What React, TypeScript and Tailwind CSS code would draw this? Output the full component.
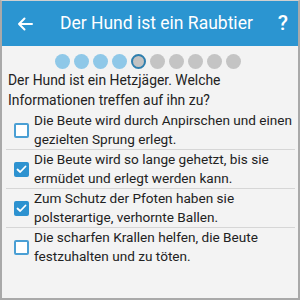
import { useState } from "react";

const options = [
  { text: "Die Beute wird durch Anpirschen und einen gezielten Sprung erlegt.", checked: false },
  { text: "Die Beute wird so lange gehetzt, bis sie ermüdet und erlegt werden kann.", checked: true },
  { text: "Zum Schutz der Pfoten haben sie polsterartige, verhornte Ballen.", checked: true },
  { text: "Die scharfen Krallen helfen, die Beute festzuhalten und zu töten.", checked: false },
];

const steps = ["done", "done", "done", "done", "current", "todo", "todo", "todo", "todo", "todo"];

export default function App() {
  const [checked, setChecked] = useState(options.map((o) => o.checked));

  return (
    <div
      className="w-[300px] h-[300px] overflow-hidden bg-[#f3f3f3] border-x-2 border-b-2 border-t border-x-[#a9a9a9] border-b-[#a9a9a9] border-t-[#d0d0d0] flex flex-col"
      style={{ fontFamily: "Roboto, 'Noto Sans', sans-serif" }}
    >
      <header className="h-[45px] shrink-0 bg-[#2b95d1] text-white flex items-center pl-[15px] pr-[10px]">
        <svg width="16" height="14" viewBox="0 0 16 14" className="shrink-0">
          <path d="M15 7H2M7.5 1.5 2 7l5.5 5.5" fill="none" stroke="white" strokeWidth="2" strokeLinecap="round" strokeLinejoin="round" />
        </svg>
        <h1 className="flex-1 text-center text-[17.5px] leading-none pl-[2px]">Der Hund ist ein Raubtier</h1>
        <span className="text-[21px] leading-none font-medium">?</span>
      </header>

      <div className="flex justify-center gap-[4px] pt-[8px] pr-[5px]">
        {steps.map((s, i) => (
          <span
            key={i}
            className={
              s === "done"
                ? "w-[15px] h-[15px] rounded-full bg-[#8fc8e8]"
                : s === "current"
                ? "w-[15px] h-[15px] rounded-full bg-[#c2c2c2] border-2 border-[#2f7fae]"
                : "w-[15px] h-[15px] rounded-full bg-[#c4c4c4]"
            }
          />
        ))}
      </div>

      <p className="px-[6px] pt-[1px] text-[13.9px] leading-[20px] text-[#222]">
        Der Hund ist ein Hetzjäger. Welche Informationen treffen auf ihn zu?
      </p>

      <ul className="pl-[4px] pt-[1px]">
        {options.map((o, i) => (
          <li
            key={i}
            className={
              i < options.length - 1
                ? "flex items-center border-b border-[#d6d6d6] mr-[3px]"
                : "flex items-center mr-[3px]"
            }
          >
            <button
              type="button"
              onClick={() => setChecked((c) => c.map((v, j) => (j === i ? !v : v)))}
              className="w-[28px] shrink-0 flex justify-center pl-[2px]"
            >
              {checked[i] ? (
                <span className="w-[15px] h-[15px] rounded-[2px] bg-[#2d92d0] flex items-center justify-center">
                  <svg width="11" height="9" viewBox="0 0 11 9">
                    <path d="M1.5 4.5 4.2 7 9.5 1.5" fill="none" stroke="white" strokeWidth="1.8" strokeLinecap="round" strokeLinejoin="round" />
                  </svg>
                </span>
              ) : (
                <span className="w-[15px] h-[15px] rounded-[2px] border-2 border-[#4a9fd4] bg-white" />
              )}
            </button>
            <span className="text-[13.6px] leading-[19px] text-[#222] -mr-[3px]">{o.text}</span>
          </li>
        ))}
      </ul>
    </div>
  );
}
